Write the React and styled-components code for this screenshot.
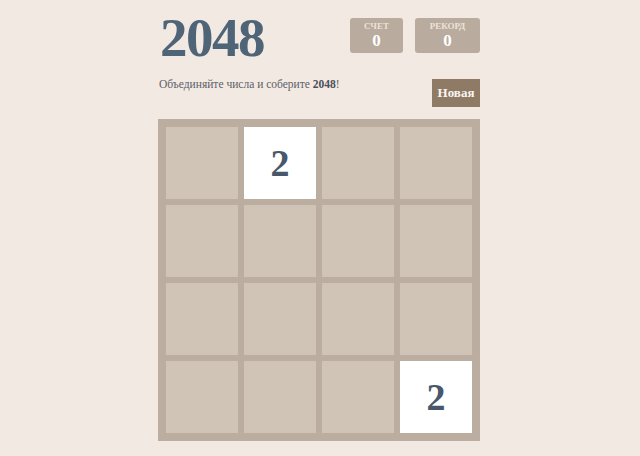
import React from "react";
import styled, { createGlobalStyle } from "styled-components";

const Global = createGlobalStyle`
  html, body { margin: 0; padding: 0; background: #f3e9e3; }
  body { font-family: "Liberation Serif", "Times New Roman", serif; }
`;

const Container = styled.div`
  width: 322px;
  margin: 0 0 0 calc(50% - 162px);
  padding-top: 6px;
`;

const Heading = styled.div`
  display: flex;
  justify-content: space-between;
  align-items: flex-start;
  height: 64px;
`;

const Title = styled.h1`
  margin: 0;
  font-size: 55px;
  line-height: 64px;
  font-weight: bold;
  letter-spacing: -1.5px;
  color: #4f6477;
  padding-left: 2px;
`;

const Scores = styled.div`
  display: flex;
  gap: 12px;
  padding-top: 12px;
`;

const ScoreBox = styled.div`
  width: ${(p) => p.$w}px;
  height: 35px;
  background: #b9ab9d;
  border-radius: 3px;
  display: flex;
  flex-direction: column;
  align-items: center;
  color: #fff;
  box-sizing: border-box;
  padding-top: 3px;
`;

const ScoreLabel = styled.div`
  font-size: 9px;
  line-height: 10px;
  font-weight: bold;
  color: #ece3da;
  text-transform: uppercase;
`;

const ScoreValue = styled.div`
  font-size: 17px;
  line-height: 20px;
  font-weight: bold;
`;

const Above = styled.div`
  display: flex;
  justify-content: space-between;
  align-items: flex-start;
  margin-top: 4px;
  margin-bottom: 12px;
`;

const Intro = styled.p`
  margin: 0;
  padding: 3px 0 0 1px;
  font-size: 11.5px;
  line-height: 14px;
  color: #5a5f66;
  & b { color: #4a4f57; }
`;

const NewButton = styled.button`
  margin-top: 5px;
  width: 48px;
  height: 28px;
  border: none;
  border-radius: 0;
  background: #8f7a66;
  color: #f9f6f2;
  font-family: "Liberation Serif", "Times New Roman", serif;
  font-weight: bold;
  font-size: 13px;
  padding: 0;
`;

const Board = styled.div`
  width: 322px;
  height: 322px;
  box-sizing: border-box;
  padding: 8px;
  background: #bbad9f;
  display: grid;
  grid-template-columns: repeat(4, 72px);
  grid-template-rows: repeat(4, 72px);
  gap: 6px;
`;

const Cell = styled.div`
  background: ${(p) => (p.$v ? "#ffffff" : "#d0c4b6")};
  display: flex;
  align-items: center;
  justify-content: center;
  font-size: 38px;
  font-weight: bold;
  color: #48576a;
`;

const cells = [0, 2, 0, 0, 0, 0, 0, 0, 0, 0, 0, 0, 0, 0, 0, 2];

export default function App() {
  return (
    <>
      <Global />
      <Container>
        <Heading>
          <Title>2048</Title>
          <Scores>
            <ScoreBox $w={53}>
              <ScoreLabel>Счет</ScoreLabel>
              <ScoreValue>0</ScoreValue>
            </ScoreBox>
            <ScoreBox $w={65}>
              <ScoreLabel>Рекорд</ScoreLabel>
              <ScoreValue>0</ScoreValue>
            </ScoreBox>
          </Scores>
        </Heading>
        <Above>
          <Intro>
            Объединяйте числа и соберите <b>2048</b>!
          </Intro>
          <NewButton>Новая</NewButton>
        </Above>
        <Board>
          {cells.map((v, i) => (
            <Cell key={i} $v={v}>
              {v || ""}
            </Cell>
          ))}
        </Board>
      </Container>
    </>
  );
}
